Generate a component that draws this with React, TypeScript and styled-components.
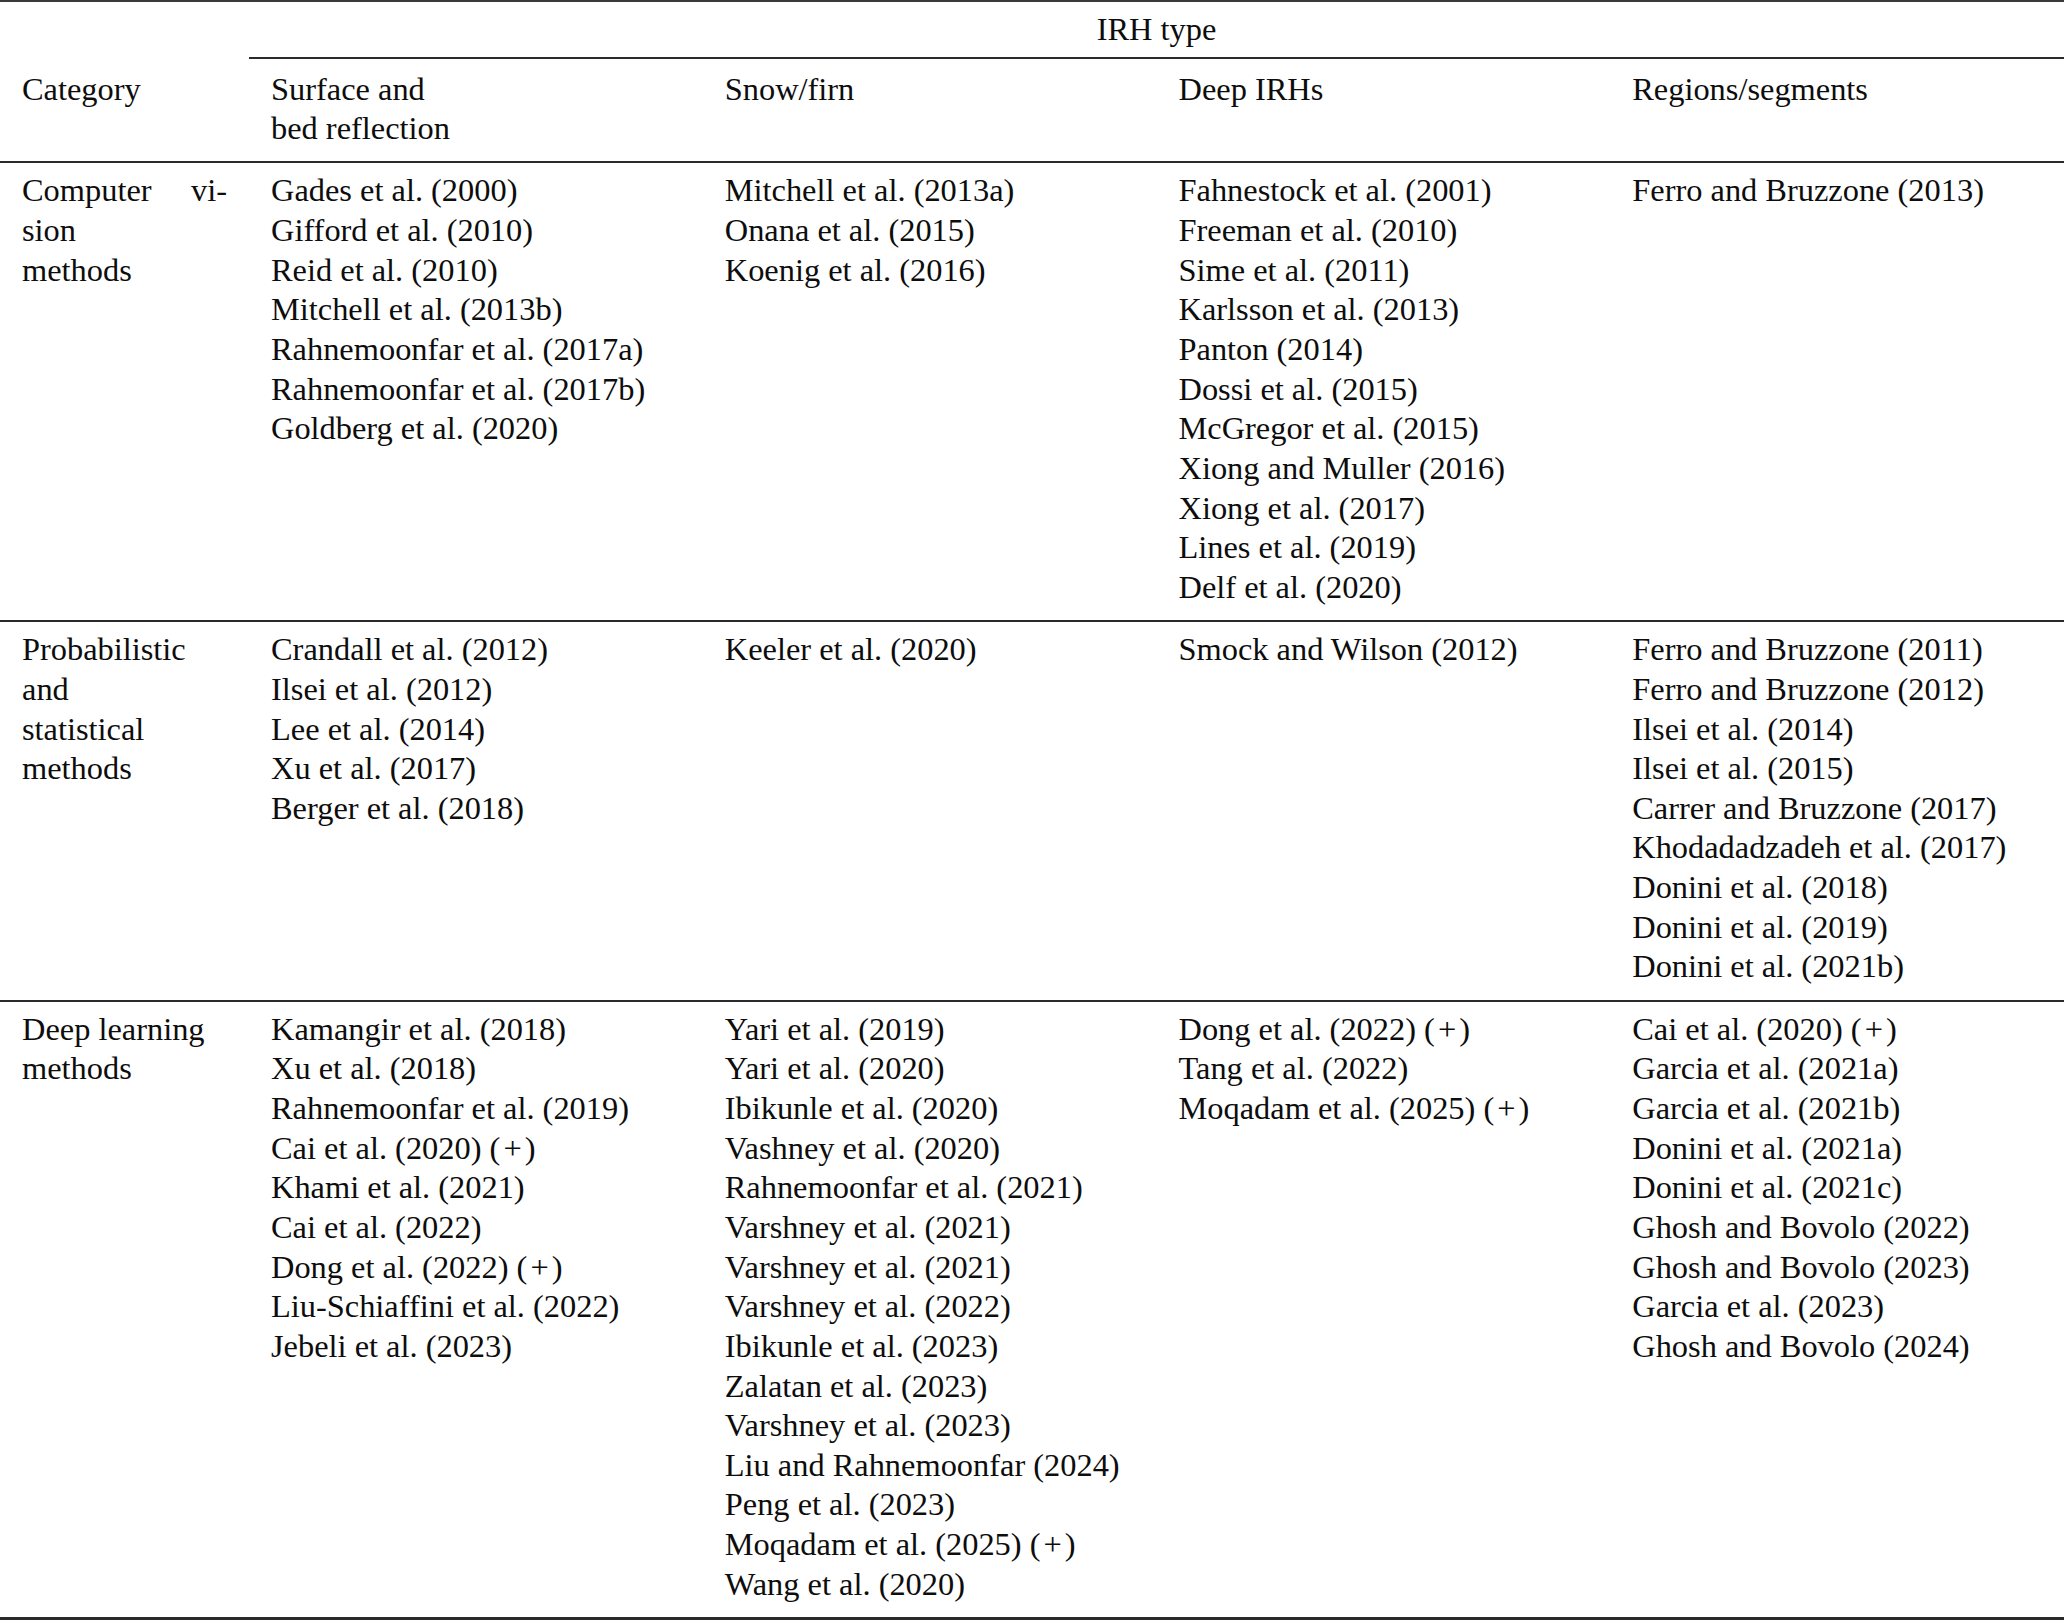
import React from "react";
import styled, { createGlobalStyle } from "styled-components";

const Global = createGlobalStyle`
  html, body { margin: 0; padding: 0; background: #fff; }
  body { font-family: "Liberation Serif", "Times New Roman", serif; color: #111; }
`;

const Table = styled.div`
  width: 2064px;
  border-top: 2px solid #3a3a3a;
  font-family: "Liberation Serif", "Times New Roman", serif;
  font-size: 32.4px;
  line-height: 39.65px;
  color: #0d0d0d;
`;

const Grid = styled.div<{ $rule?: number }>`
  display: grid;
  grid-template-columns: 249px repeat(4, 1fr);
  border-bottom: ${(p) => (p.$rule ? `${p.$rule}px solid #2a2a2a` : "none")};
`;

const SpanHead = styled.div`
  grid-column: 2 / 6;
  text-align: center;
  padding: 8px 0 7px;
  border-bottom: 2px solid #2a2a2a;
`;

const Cell = styled.div<{ $top: number; $bottom: number }>`
  padding: ${(p) => `${p.$top}px 22px ${p.$bottom}px 22px`};
  display: flex;
  flex-direction: column;
`;

const Line = styled.div`
  white-space: nowrap;
`;

const JustLine = styled.div`
  display: flex;
  justify-content: space-between;
  white-space: nowrap;
`;

const Plus = styled.span`
  display: inline-block;
  padding: 0 3px;
`;

type Row = {
  cat: React.ReactNode;
  cols: string[][];
};

const rows: Row[] = [
  {
    cat: (
      <>
        <JustLine>
          <span>Computer</span>
          <span>vi-</span>
        </JustLine>
        <Line>sion</Line>
        <Line>methods</Line>
      </>
    ),
    cols: [
      [
        "Gades et al. (2000)",
        "Gifford et al. (2010)",
        "Reid et al. (2010)",
        "Mitchell et al. (2013b)",
        "Rahnemoonfar et al. (2017a)",
        "Rahnemoonfar et al. (2017b)",
        "Goldberg et al. (2020)",
      ],
      ["Mitchell et al. (2013a)", "Onana et al. (2015)", "Koenig et al. (2016)"],
      [
        "Fahnestock et al. (2001)",
        "Freeman et al. (2010)",
        "Sime et al. (2011)",
        "Karlsson et al. (2013)",
        "Panton (2014)",
        "Dossi et al. (2015)",
        "McGregor et al. (2015)",
        "Xiong and Muller (2016)",
        "Xiong et al. (2017)",
        "Lines et al. (2019)",
        "Delf et al. (2020)",
      ],
      ["Ferro and Bruzzone (2013)"],
    ],
  },
  {
    cat: (
      <>
        <Line>Probabilistic</Line>
        <Line>and</Line>
        <Line>statistical</Line>
        <Line>methods</Line>
      </>
    ),
    cols: [
      [
        "Crandall et al. (2012)",
        "Ilsei et al. (2012)",
        "Lee et al. (2014)",
        "Xu et al. (2017)",
        "Berger et al. (2018)",
      ],
      ["Keeler et al. (2020)"],
      ["Smock and Wilson (2012)"],
      [
        "Ferro and Bruzzone (2011)",
        "Ferro and Bruzzone (2012)",
        "Ilsei et al. (2014)",
        "Ilsei et al. (2015)",
        "Carrer and Bruzzone (2017)",
        "Khodadadzadeh et al. (2017)",
        "Donini et al. (2018)",
        "Donini et al. (2019)",
        "Donini et al. (2021b)",
      ],
    ],
  },
  {
    cat: (
      <>
        <Line>Deep learning</Line>
        <Line>methods</Line>
      </>
    ),
    cols: [
      [
        "Kamangir et al. (2018)",
        "Xu et al. (2018)",
        "Rahnemoonfar et al. (2019)",
        "Cai et al. (2020) (+)",
        "Khami et al. (2021)",
        "Cai et al. (2022)",
        "Dong et al. (2022) (+)",
        "Liu-Schiaffini et al. (2022)",
        "Jebeli et al. (2023)",
      ],
      [
        "Yari et al. (2019)",
        "Yari et al. (2020)",
        "Ibikunle et al. (2020)",
        "Vashney et al. (2020)",
        "Rahnemoonfar et al. (2021)",
        "Varshney et al. (2021)",
        "Varshney et al. (2021)",
        "Varshney et al. (2022)",
        "Ibikunle et al. (2023)",
        "Zalatan et al. (2023)",
        "Varshney et al. (2023)",
        "Liu and Rahnemoonfar (2024)",
        "Peng et al. (2023)",
        "Moqadam et al. (2025) (+)",
        "Wang et al. (2020)",
      ],
      ["Dong et al. (2022) (+)", "Tang et al. (2022)", "Moqadam et al. (2025) (+)"],
      [
        "Cai et al. (2020) (+)",
        "Garcia et al. (2021a)",
        "Garcia et al. (2021b)",
        "Donini et al. (2021a)",
        "Donini et al. (2021c)",
        "Ghosh and Bovolo (2022)",
        "Ghosh and Bovolo (2023)",
        "Garcia et al. (2023)",
        "Ghosh and Bovolo (2024)",
      ],
    ],
  },
];

function renderRef(text: string) {
  if (text.endsWith("(+)")) {
    const base = text.slice(0, -3);
    return (
      <>
        {base}(<Plus>+</Plus>)
      </>
    );
  }
  return text;
}

export default function App() {
  return (
    <>
      <Global />
      <Table>
        <Grid>
          <div />
          <SpanHead>IRH type</SpanHead>
        </Grid>
        <Grid $rule={2}>
          <Cell $top={11} $bottom={12.5}>
            <Line>Category</Line>
          </Cell>
          <Cell $top={11} $bottom={12.5}>
            <Line>Surface and</Line>
            <Line>bed reflection</Line>
          </Cell>
          <Cell $top={11} $bottom={12.5}>
            <Line>Snow/firn</Line>
          </Cell>
          <Cell $top={11} $bottom={12.5}>
            <Line>Deep IRHs</Line>
          </Cell>
          <Cell $top={11} $bottom={12.5}>
            <Line>Regions/segments</Line>
          </Cell>
        </Grid>
        {rows.map((r, i) => (
          <Grid key={i} $rule={i === rows.length - 1 ? 3 : 2}>
            <Cell $top={8} $bottom={12.5}>{r.cat}</Cell>
            {r.cols.map((c, j) => (
              <Cell key={j} $top={8} $bottom={12.5}>
                {c.map((t, k) => (
                  <Line key={k}>{renderRef(t)}</Line>
                ))}
              </Cell>
            ))}
          </Grid>
        ))}
      </Table>
    </>
  );
}
